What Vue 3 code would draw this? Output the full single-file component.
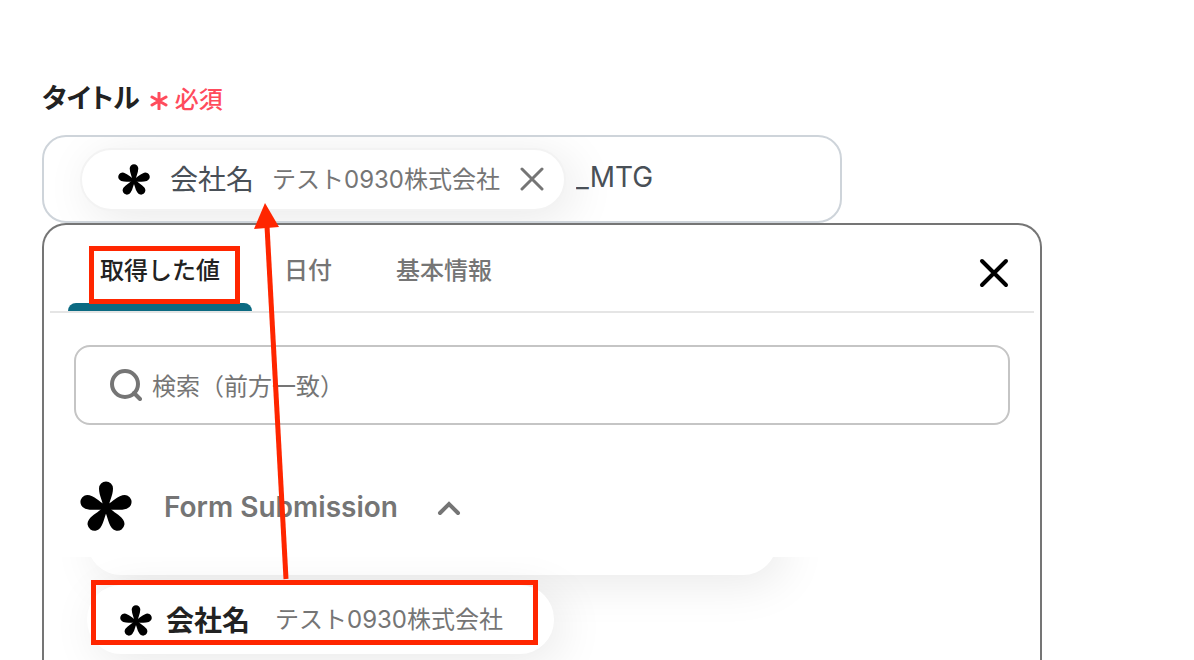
<template>
  <main class="page">
    <div class="label-row">
      <label class="title" for="title-input">タイトル</label>
      <span class="required">
        <svg class="required-mark" viewBox="0 0 18 18" aria-hidden="true">
          <path d="M9 1V17M2 5L16 13M16 5L2 13" />
        </svg>
        必須
      </span>
    </div>

    <div class="field">
      <div class="chip chip-selected">
        <svg class="logo logo-small" viewBox="0 0 52 52" aria-hidden="true">
          <path v-for="angle in PETALS" :key="angle" :d="PETAL_PATH" :transform="`rotate(${angle} 26 27)`" />
        </svg>
        <span class="chip-name">会社名</span>
        <span class="chip-value">{{ companyValue }}</span>
        <button class="icon-button chip-remove" type="button" aria-label="削除">
          <svg viewBox="0 0 24 24"><path d="M2 2L22 22M22 2L2 22" /></svg>
        </button>
      </div>
      <input id="title-input" v-model="title" class="title-input" type="text" />
    </div>

    <section class="panel">
      <div class="tab-bar">
        <div class="tabs" role="tablist">
          <button
            v-for="tab in tabs"
            :key="tab"
            class="tab"
            :class="{ active: tab === activeTab }"
            type="button"
            role="tab"
            :aria-selected="tab === activeTab"
            @click="activeTab = tab"
          >{{ tab }}</button>
        </div>
        <button class="icon-button panel-close" type="button" aria-label="閉じる">
          <svg viewBox="0 0 32 32"><path d="M4 4L28 28M28 4L4 28" /></svg>
        </button>
      </div>

      <label class="search">
        <svg class="search-icon" viewBox="0 0 32 32" aria-hidden="true">
          <circle cx="15" cy="15" r="13" />
          <path d="M24 24L30 30" />
        </svg>
        <input v-model="keyword" class="search-input" type="text" placeholder="検索（前方一致）" aria-label="検索" />
      </label>

      <button class="group" type="button" @click="open = !open">
        <svg class="logo logo-large" viewBox="0 0 52 52" aria-hidden="true">
          <path v-for="angle in PETALS" :key="angle" :d="PETAL_PATH" :transform="`rotate(${angle} 26 27)`" />
        </svg>
        <span>Form Submission</span>
        <svg class="chevron" viewBox="0 0 24 16" aria-hidden="true"><path d="M3 13L12 4L21 13" /></svg>
      </button>

      <div v-show="open" class="list">
        <div class="chip chip-scrolled"></div>
        <button class="chip chip-option" type="button">
          <svg class="logo logo-small" viewBox="0 0 52 52" aria-hidden="true">
            <path v-for="angle in PETALS" :key="angle" :d="PETAL_PATH" :transform="`rotate(${angle} 26 27)`" />
          </svg>
          <span class="chip-name">会社名</span>
          <span class="chip-value">{{ companyValue }}</span>
        </button>
      </div>
    </section>

    <!-- 説明用の赤枠と矢印 -->
    <svg class="annotation" aria-hidden="true">
      <rect x="91.5" y="248.5" width="146" height="53" />
      <rect x="93.5" y="582.5" width="442" height="60" />
      <path class="arrow-line" d="M267 226L286 579" />
      <path class="arrow-head" d="M265 203L279 227L254 229Z" />
    </svg>
  </main>
</template>

<script setup>
import { ref } from 'vue'

const PETALS = [0, 72, 144, 216, 288]
const PETAL_PATH = 'M23.5 28C23.5 21 19 15 19 7.5a7 7 0 0 1 14 0C33 15 28.5 21 28.5 28z'

const companyValue = 'テスト0930株式会社'
const tabs = ['取得した値', '日付', '基本情報']

const activeTab = ref(tabs[0])
const title = ref('_MTG')
const keyword = ref('')
const open = ref(true)
</script>

<style>
body {
  background: #fff;
}
</style>

<style scoped>
.page {
  position: relative;
  display: flex;
  flex-direction: column;
  height: 100vh;
  padding: 80px 42px 0;
  box-sizing: border-box;
  overflow: hidden;
  font-family: Inter, 'Noto Sans CJK JP', sans-serif;
  color: #222;
}

.page * {
  box-sizing: border-box;
}

button,
input {
  padding: 0;
  border: 0;
  background: none;
  font: inherit;
  color: inherit;
  outline: none;
}

button {
  cursor: pointer;
}

svg {
  flex: none;
  fill: none;
  stroke: currentColor;
  stroke-linecap: round;
}

.label-row {
  display: flex;
  align-items: center;
  gap: 10px;
  height: 36px;
  margin-bottom: 19px;
  flex: none;
}

.title {
  padding-bottom: 4px;
  font-size: 27px;
  font-weight: 600;
  font-feature-settings: 'palt';
}

.required {
  display: flex;
  align-items: center;
  gap: 7px;
  padding-bottom: 2px;
  font-size: 24px;
  font-weight: 500;
  color: #ff4b5c;
}

.required-mark {
  width: 18px;
  height: 18px;
  margin-top: 8px;
  stroke-width: 3;
}

.field {
  display: flex;
  align-items: center;
  flex: none;
  width: 100%;
  max-width: 800px;
  height: 88px;
  padding: 0 36px;
  border: 2px solid #ced4da;
  border-radius: 24px;
  overflow: hidden;
}

.chip {
  display: flex;
  align-items: center;
  flex: none;
  border-radius: 34px;
  background: #fff;
  box-shadow: 8px 8px 48px rgba(0, 0, 0, 0.09);
  white-space: nowrap;
}

.chip-selected {
  height: 63px;
  padding: 0 20px 0 36px;
  border: 2px solid #f3f3f3;
  color: #495057;
}

.chip-name {
  padding-bottom: 2px;
  font-size: 28px;
}

.chip-value {
  padding-bottom: 4px;
  font-size: 24px;
  font-weight: 400;
  color: #757575;
}

.chip-selected .chip-name {
  margin: 0 18px 0 20px;
}

.logo path {
  fill: #000;
  stroke: none;
}

.logo-small {
  width: 32px;
  height: 32px;
  margin-top: 2px;
}

.logo-large {
  width: 52px;
  height: 52px;
}

.icon-button {
  display: flex;
  flex: none;
}

.chip-remove {
  margin-left: 20px;
  color: #757575;
}

.chip-remove svg {
  width: 24px;
  height: 24px;
  stroke-width: 3;
}

.title-input {
  flex: 1;
  min-width: 0;
  height: 60px;
  margin: 0 0 4px 10px;
  font-size: 28px;
  color: #495057;
}

.panel {
  display: flex;
  flex-direction: column;
  flex: 1;
  min-height: 0;
  width: 100%;
  max-width: 1000px;
  padding: 0 6px;
  border: 2px solid #757575;
  border-bottom: 0;
  border-radius: 24px 24px 0 0;
}

.tab-bar {
  display: flex;
  justify-content: space-between;
  align-items: flex-end;
  flex: none;
  height: 88px;
  padding: 0 24px 0 18px;
  border-bottom: 2px solid #e5e5e5;
}

.tabs {
  display: flex;
}

.tab {
  position: relative;
  height: 80px;
  padding: 0 32px 6px;
  font-size: 24px;
  font-weight: 500;
  color: #757575;
}

.tab.active {
  color: #222;
}

.tab.active::after {
  content: '';
  position: absolute;
  left: 0;
  right: 0;
  bottom: 0;
  height: 8px;
  border-radius: 8px 8px 0 0;
  background: #0b6a82;
}

.panel-close {
  margin-bottom: 22px;
  color: #000;
}

.panel-close svg {
  width: 32px;
  height: 32px;
  stroke-width: 4;
}

.search {
  display: flex;
  align-items: center;
  gap: 10px;
  flex: none;
  height: 80px;
  margin: 32px 24px 0;
  padding: 0 34px;
  border: 2px solid #c5c5c5;
  border-radius: 16px;
  color: #757575;
}

.search-icon {
  width: 32px;
  height: 32px;
  stroke-width: 4;
}

.search-input {
  flex: 1;
  min-width: 0;
  height: 60px;
  padding-top: 2px;
  font-size: 24px;
}

.search-input::placeholder {
  color: #757575;
  opacity: 1;
}

.group {
  display: flex;
  align-items: center;
  align-self: flex-start;
  flex: none;
  height: 100px;
  margin: 32px 0 0 30px;
  font-size: 28px;
  font-weight: 600;
  color: #757575;
}

.group span {
  margin: 0 39px 0 32px;
}

.chevron {
  width: 24px;
  height: 16px;
  margin-top: 2px;
  stroke-width: 4;
}

.list {
  display: flex;
  flex-direction: column;
  align-items: flex-start;
  gap: 10px;
  flex: 1;
  min-height: 0;
  padding: 0 37px;
  overflow: hidden;
}

/* 上にスクロールされて下端だけ見えている項目 */
.chip-scrolled {
  width: 690px;
  height: 68px;
  margin-top: -50px;
}

.chip-option {
  height: 69px;
  padding: 0 51px 0 33px;
}

.chip-option .chip-name {
  margin: 0 25px 0 14px;
  font-weight: 600;
}

.annotation {
  position: absolute;
  top: 0;
  left: 0;
  width: 100%;
  height: 100%;
  color: #ff2600;
  stroke-width: 5;
  stroke-linecap: butt;
  pointer-events: none;
}

.arrow-head {
  fill: #ff2600;
  stroke: none;
}
</style>
